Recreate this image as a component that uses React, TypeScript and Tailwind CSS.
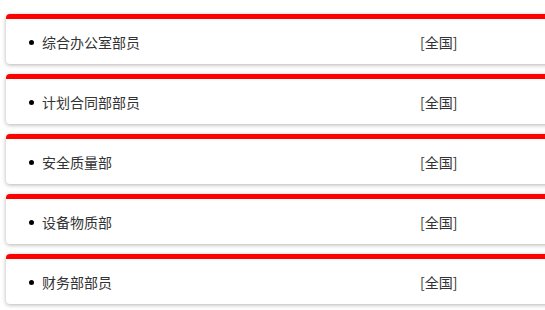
const rows = [
  { name: "综合办公室部员", area: "[全国]" },
  { name: "计划合同部部员", area: "[全国]" },
  { name: "安全质量部", area: "[全国]" },
  { name: "设备物质部", area: "[全国]" },
  { name: "财务部部员", area: "[全国]" },
];

export default function App() {
  return (
    <div
      className="w-[545px] h-[310px] overflow-hidden bg-white pt-[14px] pl-[6px]"
      style={{ fontFamily: '"Microsoft YaHei", "Noto Sans CJK SC", sans-serif' }}
    >
      <ul className="w-[560px]">
        {rows.map((r) => (
          <li
            key={r.name}
            className="mb-[10px] h-[50px] rounded-[4px] border-t-[5px] border-[#ff0000] bg-white shadow-[0_1px_4px_rgba(0,0,0,0.3)] flex items-center pt-[1px] pl-[23px] text-[14px] text-[#333]"
          >
            <span className="w-[5px] h-[5px] rounded-full bg-black mr-[8px]" />
            <span className="w-[378px]">{r.name}</span>
            <span>{r.area}</span>
          </li>
        ))}
      </ul>
    </div>
  );
}
